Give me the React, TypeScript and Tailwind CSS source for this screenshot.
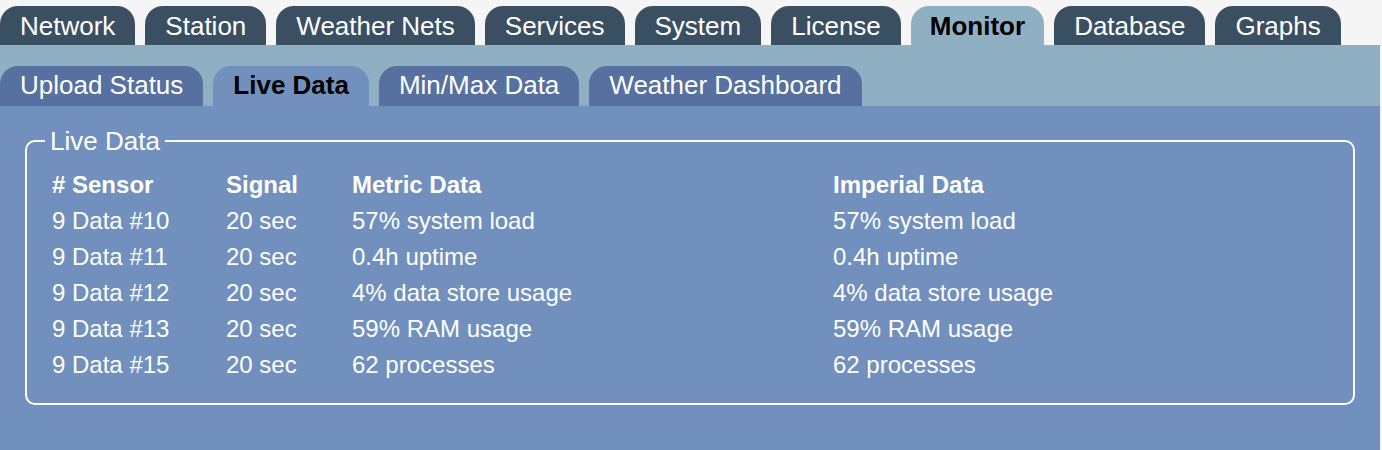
import React from "react";

const TOP_TABS = [
  "Network",
  "Station",
  "Weather Nets",
  "Services",
  "System",
  "License",
  "Monitor",
  "Database",
  "Graphs",
];

const SUB_TABS = ["Upload Status", "Live Data", "Min/Max Data", "Weather Dashboard"];

const ROWS = [
  { sensor: "9 Data #10", signal: "20 sec", value: "57% system load" },
  { sensor: "9 Data #11", signal: "20 sec", value: "0.4h uptime" },
  { sensor: "9 Data #12", signal: "20 sec", value: "4% data store usage" },
  { sensor: "9 Data #13", signal: "20 sec", value: "59% RAM usage" },
  { sensor: "9 Data #15", signal: "20 sec", value: "62 processes" },
];

export default function App() {
  return (
    <div
      className="min-h-[450px] w-full bg-[#f5f5f5]"
      style={{ fontFamily: '"Liberation Sans", Arial, sans-serif' }}
    >
      <div className="w-[1380px]">
        {/* top tabs */}
        <nav className="flex gap-[10px] pt-[6px]">
          {TOP_TABS.map((t) =>
            t === "Monitor" ? (
              <div
                key={t}
                className="h-[39px] px-[19px] flex items-center rounded-t-[18px] bg-[#8fb0c3] text-black font-bold text-[26px] leading-none"
              >
                {t}
              </div>
            ) : (
              <div
                key={t}
                className="h-[39px] px-[20px] flex items-center rounded-t-[18px] bg-[#3b4f63] text-white text-[26px] leading-none"
              >
                {t}
              </div>
            )
          )}
        </nav>

        {/* sub tabs */}
        <nav className="flex gap-[10px] bg-[#8fb0c3] pt-[21px]">
          {SUB_TABS.map((t) =>
            t === "Live Data" ? (
              <div
                key={t}
                className="h-[40px] px-[20px] pb-[3px] flex items-center rounded-t-[18px] bg-[#7190be] text-black font-bold text-[26px] leading-none"
              >
                {t}
              </div>
            ) : (
              <div
                key={t}
                className="h-[40px] px-[20px] pb-[3px] flex items-center rounded-t-[18px] bg-[#5670a0] text-white text-[26px] leading-none"
              >
                {t}
              </div>
            )
          )}
        </nav>

        {/* content */}
        <main className="bg-[#7190be] h-[344px] pt-[22px] px-[25px]">
          <fieldset className="border-2 border-white rounded-[10px] pl-[25px] pr-[20px] pt-[13px] pb-[20px] text-white">
            <legend className="px-[5px] -ml-[7px] text-[26px] leading-[26px]">Live Data</legend>
            <div className="grid grid-cols-[174px_126px_481px_1fr] text-[24px] leading-[36px]">
              <div className="font-bold"># Sensor</div>
              <div className="font-bold">Signal</div>
              <div className="font-bold">Metric Data</div>
              <div className="font-bold">Imperial Data</div>
              {ROWS.map((r) => (
                <React.Fragment key={r.sensor}>
                  <div>{r.sensor}</div>
                  <div>{r.signal}</div>
                  <div>{r.value}</div>
                  <div>{r.value}</div>
                </React.Fragment>
              ))}
            </div>
          </fieldset>
        </main>
      </div>
    </div>
  );
}
